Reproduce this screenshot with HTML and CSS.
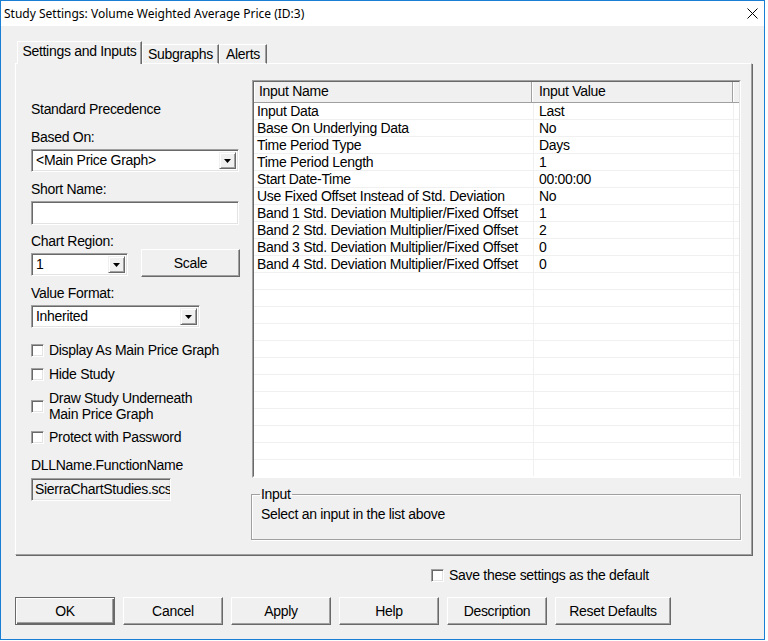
FILE: index.html
```html
<!DOCTYPE html>
<html lang="en">
<head>
    <meta charset="UTF-8">
    <meta name="viewport" content="width=device-width, initial-scale=1.0">
    <title>Study Settings</title>
    <link rel="stylesheet" href="styles.css">
</head>
<body>
    <div class="window">
        <div class="titlebar">
            <span class="title">Study Settings: Volume Weighted Average Price (ID:3)</span>
            <svg class="close" width="11" height="11" viewBox="0 0 11 11">
                <path d="M0.5 0.5 L10.5 10.5 M10.5 0.5 L0.5 10.5" stroke="#000" stroke-width="1" fill="none"/>
            </svg>
        </div>

        <div class="client">
            <div class="tabs">
                <div class="tab active tab-settings">Settings and Inputs</div>
                <div class="tab tab-subgraphs">Subgraphs</div>
                <div class="tab tab-alerts">Alerts</div>
            </div>

            <div class="panel">
                <!-- left column -->
                <div class="left">
                    <div class="label std">Standard Precedence</div>

                    <div class="label gap-12">Based On:</div>
                    <div class="combo combo-based">
                        <span class="combo-text">&lt;Main Price Graph&gt;</span>
                        <span class="combo-btn"><svg width="7" height="4" viewBox="0 0 7 4"><polygon points="0,0 7,0 3.5,4" fill="#000"/></svg></span>
                    </div>

                    <div class="label gap-9">Short Name:</div>
                    <div class="textbox textbox-short"></div>

                    <div class="label gap-8">Chart Region:</div>
                    <div class="region-row">
                        <div class="combo combo-region">
                            <span class="combo-text">1</span>
                            <span class="combo-btn"><svg width="7" height="4" viewBox="0 0 7 4"><polygon points="0,0 7,0 3.5,4" fill="#000"/></svg></span>
                        </div>
                        <div class="btn btn-scale">Scale</div>
                    </div>

                    <div class="label gap-8">Value Format:</div>
                    <div class="combo combo-format">
                        <span class="combo-text">Inherited</span>
                        <span class="combo-btn"><svg width="7" height="4" viewBox="0 0 7 4"><polygon points="0,0 7,0 3.5,4" fill="#000"/></svg></span>
                    </div>

                    <div class="check first"><span class="box"></span><span>Display As Main Price Graph</span></div>
                    <div class="check"><span class="box"></span><span>Hide Study</span></div>
                    <div class="check"><span class="box"></span><span>Draw Study Underneath<br>Main Price Graph</span></div>
                    <div class="check tight"><span class="box"></span><span>Protect with Password</span></div>

                    <div class="label gap-12">DLLName.FunctionName</div>
                    <div class="textbox textbox-dll">SierraChartStudies.scs</div>
                </div>

                <!-- right column -->
                <div class="right">
                    <div class="grid">
                        <div class="grid-inner">
                            <div class="grid-head">
                                <div class="hcell hname">Input Name</div>
                                <div class="hcell hvalue">Input Value</div>
                                <div class="hcell hfill"></div>
                            </div>
                            <div class="row"><div class="cell name">Input Data</div><div class="cell value">Last</div><div class="cell fill"></div></div>
                            <div class="row"><div class="cell name">Base On Underlying Data</div><div class="cell value">No</div><div class="cell fill"></div></div>
                            <div class="row"><div class="cell name">Time Period Type</div><div class="cell value">Days</div><div class="cell fill"></div></div>
                            <div class="row"><div class="cell name">Time Period Length</div><div class="cell value">1</div><div class="cell fill"></div></div>
                            <div class="row"><div class="cell name">Start Date-Time</div><div class="cell value">00:00:00</div><div class="cell fill"></div></div>
                            <div class="row"><div class="cell name">Use Fixed Offset Instead of Std. Deviation</div><div class="cell value">No</div><div class="cell fill"></div></div>
                            <div class="row"><div class="cell name">Band 1 Std. Deviation Multiplier/Fixed Offset</div><div class="cell value">1</div><div class="cell fill"></div></div>
                            <div class="row"><div class="cell name">Band 2 Std. Deviation Multiplier/Fixed Offset</div><div class="cell value">2</div><div class="cell fill"></div></div>
                            <div class="row"><div class="cell name">Band 3 Std. Deviation Multiplier/Fixed Offset</div><div class="cell value">0</div><div class="cell fill"></div></div>
                            <div class="row"><div class="cell name">Band 4 Std. Deviation Multiplier/Fixed Offset</div><div class="cell value">0</div><div class="cell fill"></div></div>
                            <div class="row"><div class="cell name"></div><div class="cell value"></div><div class="cell fill"></div></div>
                            <div class="row"><div class="cell name"></div><div class="cell value"></div><div class="cell fill"></div></div>
                            <div class="row"><div class="cell name"></div><div class="cell value"></div><div class="cell fill"></div></div>
                            <div class="row"><div class="cell name"></div><div class="cell value"></div><div class="cell fill"></div></div>
                            <div class="row"><div class="cell name"></div><div class="cell value"></div><div class="cell fill"></div></div>
                            <div class="row"><div class="cell name"></div><div class="cell value"></div><div class="cell fill"></div></div>
                            <div class="row"><div class="cell name"></div><div class="cell value"></div><div class="cell fill"></div></div>
                            <div class="row"><div class="cell name"></div><div class="cell value"></div><div class="cell fill"></div></div>
                            <div class="row"><div class="cell name"></div><div class="cell value"></div><div class="cell fill"></div></div>
                            <div class="row"><div class="cell name"></div><div class="cell value"></div><div class="cell fill"></div></div>
                            <div class="row"><div class="cell name"></div><div class="cell value"></div><div class="cell fill"></div></div>
                            <div class="row"><div class="cell name"></div><div class="cell value"></div><div class="cell fill"></div></div>
                        </div>
                    </div>

                    <fieldset class="group">
                        <legend>Input</legend>
                        <div class="group-text">Select an input in the list above</div>
                    </fieldset>
                </div>
            </div>

            <div class="save-row">
                <div class="check"><span class="box"></span><span>Save these settings as the default</span></div>
            </div>

            <div class="buttons">
                <div class="btn default">OK</div>
                <div class="btn">Cancel</div>
                <div class="btn">Apply</div>
                <div class="btn">Help</div>
                <div class="btn">Description</div>
                <div class="btn wide">Reset Defaults</div>
            </div>
        </div>
    </div>
</body>
</html>
```

FILE: styles.css
```css
body {
    margin: 0;
    background-color: #fff;
    font-family: "Liberation Sans", Arial, sans-serif;
    font-size: 14px;
    letter-spacing: -0.3px;
    line-height: 16px;
    color: #000;
}

.window {
    width: 765px;
    height: 640px;
    box-sizing: border-box;
    border: 1px solid #1a7fd4;
    background-color: #f0f0f0;
    display: flex;
    flex-direction: column;
}

.titlebar {
    height: 25px;
    flex: none;
    background-color: #fff;
    display: flex;
    align-items: center;
    justify-content: space-between;
    padding: 0 6px 0 3px;
}

.title {
    font-family: "Noto Sans", sans-serif;
    font-size: 12px;
    letter-spacing: 0;
}

.client {
    padding: 15px 12px 0 14px;
}

/* tabs */
.tabs {
    display: flex;
    align-items: flex-end;
    height: 23px;
    padding-left: 2px;
    margin-bottom: -1px;
    position: relative;
    z-index: 1;
}

.tab {
    box-sizing: border-box;
    height: 20px;
    border: 1px solid;
    border-color: #fff #696969 transparent #fff;
    box-shadow: inset -1px 0 #a0a0a0;
    text-align: center;
    line-height: 16px;
    padding-top: 1px;
}

.tab.active {
    height: 23px;
    border-bottom: none;
    background-color: #f0f0f0;
    padding-top: 1px;
    line-height: 16px;
}

.tab-settings { width: 125px; }
.tab-subgraphs { width: 77px; }
.tab-alerts { width: 48px; }

.panel {
    box-sizing: border-box;
    height: 492px;
    border: 1px solid;
    border-color: #fff #a0a0a0 #a0a0a0 #fff;
    box-shadow: 1px 1px 0 #696969;
    display: flex;
    gap: 12px;
    padding: 16px 10px 0 15px;
}

/* left column */
.left {
    width: 209px;
    display: flex;
    flex-direction: column;
}

.label.std { margin-top: 21px; }
.gap-12 { margin-top: 12px; }
.gap-9 { margin-top: 9px; }
.gap-8 { margin-top: 8px; }

.combo,
.textbox {
    box-sizing: border-box;
    height: 23px;
    border: 1px solid;
    border-color: #a0a0a0 #fff #fff #a0a0a0;
    box-shadow: inset 1px 1px #696969, inset -1px -1px #e3e3e3;
    background-color: #fff;
}

.combo {
    display: flex;
    align-items: stretch;
    padding: 2px;
    margin-top: 4px;
}

.combo-text {
    flex: 1;
    padding-left: 2px;
    line-height: 17px;
}

.combo-btn {
    width: 17px;
    box-sizing: border-box;
    background-color: #f0f0f0;
    border: 1px solid;
    border-color: #f0f0f0 #696969 #696969 #f0f0f0;
    box-shadow: inset 1px 1px #fff, inset -1px -1px #a0a0a0;
    display: flex;
    align-items: center;
    justify-content: center;
}

.combo-based { width: 208px; }
.combo-format { width: 169px; }

.textbox { margin-top: 4px; }
.textbox-short { width: 208px; height: 24px; }

.textbox-dll {
    width: 140px;
    margin-top: 5px;
    background-color: #f0f0f0;
    overflow: hidden;
    white-space: nowrap;
    padding: 2px 0 0 3px;
    line-height: 17px;
}

.region-row {
    display: flex;
    gap: 13px;
    align-items: flex-start;
}

.combo-region {
    width: 97px;
    margin-top: 4px;
}

.btn {
    box-sizing: border-box;
    height: 28px;
    background-color: #f0f0f0;
    border: 1px solid;
    border-color: #fff #696969 #696969 #fff;
    box-shadow: inset -1px -1px #a0a0a0;
    display: flex;
    align-items: center;
    justify-content: center;
}

.btn-scale { width: 99px; }

.check {
    display: flex;
    align-items: center;
    gap: 5px;
    margin-top: 8px;
}

.check.first { margin-top: 14px; }
.check.tight { margin-top: 7px; }

.box {
    box-sizing: border-box;
    width: 13px;
    height: 13px;
    flex: none;
    background-color: #fff;
    border: 1px solid;
    border-color: #a0a0a0 #fff #fff #a0a0a0;
    box-shadow: inset 1px 1px #696969, inset -1px -1px #e3e3e3;
}

/* right column */
.right {
    width: 489px;
    display: flex;
    flex-direction: column;
}

.grid {
    box-sizing: border-box;
    height: 398px;
    border: 1px solid;
    border-color: #a0a0a0 #fff #fff #a0a0a0;
    overflow: hidden;
}

.grid-inner {
    height: 100%;
    box-sizing: border-box;
    border: 1px solid;
    border-color: #696969 #e3e3e3 transparent #696969;
    background-color: #fff;
    overflow: hidden;
}

.grid-head {
    display: flex;
    height: 21px;
    box-sizing: border-box;
    background-color: #f0f0f0;
    border-bottom: 1px solid #a0a0a0;
}

.hcell {
    box-sizing: border-box;
    border-left: 1px solid #fff;
    border-right: 1px solid #a0a0a0;
    line-height: 19px;
}

.hname { width: 278px; padding-left: 4px; }
.hvalue { width: 201px; padding-left: 6px; }
.hfill { flex: 1; border-right: none; }

.row {
    display: flex;
    height: 17px;
    box-sizing: border-box;
    border-bottom: 1px solid #f0f0f0;
}

.cell {
    box-sizing: border-box;
    border-right: 1px solid #f0f0f0;
    white-space: nowrap;
    overflow: hidden;
    line-height: 16px;
}

.cell.name { width: 280px; padding-left: 3px; }
.cell.value { width: 200px; padding-left: 5px; }
.cell.fill { flex: 1; border-right: none; }

.group {
    margin: 8px 0 0 -1px;
    padding: 4px 9px 17px 9px;
    border: 1px solid #a0a0a0;
    box-shadow: 1px 1px 0 #fff, inset 1px 1px 0 #fff;
    min-width: 0;
}

.group legend {
    padding: 0 1px;
    margin-left: -1px;
}

/* bottom */
.save-row {
    padding-left: 416px;
    margin-top: 12px;
}

.save-row .check { margin-top: 0; gap: 5px; }

.buttons {
    display: flex;
    gap: 8px;
    margin-top: 14px;
}

.buttons .btn { width: 100px; }
.buttons .btn.wide { width: 116px; }

.btn.default {
    border-color: #696969;
    box-shadow: inset 1px 1px #fff, inset -1px -1px #696969, inset -2px -2px #a0a0a0;
}
```
